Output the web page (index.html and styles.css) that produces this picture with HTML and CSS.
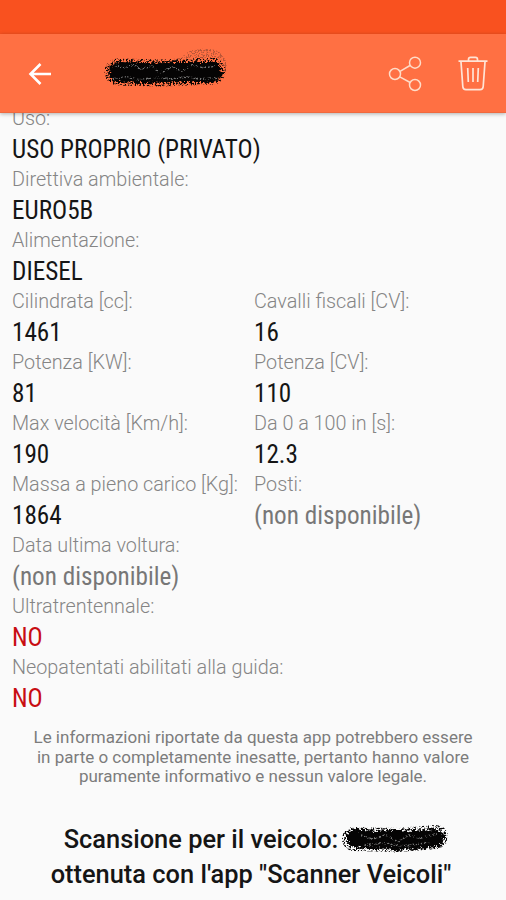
FILE: index.html
```html
<!DOCTYPE html>
<html lang="it">
<head>
    <meta charset="UTF-8">
    <meta name="viewport" content="width=device-width, initial-scale=1.0">
    <title>Scanner Veicoli</title>
    <link rel="stylesheet" href="styles.css">
</head>
<body>

<div class="status-bar"></div>
<header class="toolbar">
    <svg class="back" width="24" height="24" viewBox="0 0 24 24">
        <path d="M12.5 2 L2.5 12 L12.5 22 M2.5 12 H23"/>
    </svg>
    <svg class="plate" width="136" height="60" viewBox="0 0 136 60">
        <defs>
            <filter id="rough" filterUnits="userSpaceOnUse" x="0" y="0" width="136" height="60" color-interpolation-filters="sRGB">
                <feTurbulence type="fractalNoise" baseFrequency="0.4" numOctaves="2" seed="4" result="noise"/>
                <feDisplacementMap in="SourceGraphic" in2="noise" scale="9" xChannelSelector="R" yChannelSelector="G"/>
                <feGaussianBlur stdDeviation="0.5"/>
            </filter>
            <filter id="speckle" filterUnits="userSpaceOnUse" x="0" y="0" width="136" height="60" color-interpolation-filters="sRGB">
                <feTurbulence type="fractalNoise" baseFrequency="0.6" numOctaves="2" seed="9"/>
                <feColorMatrix type="matrix" values="0 0 0 0 0  0 0 0 0 0  0 0 0 0 0  7 0 0 0 -3.4" result="dots"/>
                <feComposite in="SourceGraphic" in2="dots" operator="in"/>
                <feGaussianBlur stdDeviation="0.4"/>
            </filter>
        </defs>
        <path class="spray" filter="url(#speckle)" d="M86 20 Q92 13 106 14 Q120 13 122 26 L118 34"/>
        <g filter="url(#speckle)">
            <path class="halo" d="M18 32 L60 33 L112 31"/>
        </g>
        <g filter="url(#rough)">
            <path class="ink" d="M19 32 L45 33 L80 32 L112 32"/>
        </g>
        <g filter="url(#speckle)">
            <path class="grain" d="M14 25 L24 28 L33 25 L41 29 L52 26 L60 33 L71 27 L82 31 L92 25 L102 28 L114 26 M13 39 L27 37 L40 40 L55 37 L70 39 L86 37 L100 39 L117 38"/>
        </g>
    </svg>
    <svg class="share" width="36" height="38" viewBox="0 0 36 38">
        <circle cx="8" cy="19" r="5.5"/>
        <circle cx="28" cy="7.7" r="5.5"/>
        <circle cx="28" cy="30" r="5.5"/>
        <path d="M13 16.3 L23 10.5 M12.8 21.8 L23.2 27.5"/>
    </svg>
    <svg class="trash" width="32" height="38" viewBox="0 0 32 38">
        <path d="M1.5 6.2 H30.5 M4 7 L5.8 31.5 Q6 34.7 9 34.7 H23 Q26 34.7 26.2 31.5 L28 7 M11.5 5.5 V4.5 Q11.5 2.3 13.5 2.3 H18.5 Q20.5 2.3 20.5 4.5 V5.5"/>
        <path d="M10.7 13 L11.3 27 M16 13 V27 M21.3 13 L20.7 27"/>
    </svg>
</header>

<main class="details">
    <div class="field"><span class="label">Uso:</span><span class="value">USO PROPRIO (PRIVATO)</span></div>
    <div class="field"><span class="label">Direttiva ambientale:</span><span class="value">EURO5B</span></div>
    <div class="field"><span class="label">Alimentazione:</span><span class="value">DIESEL</span></div>
    <div class="pair">
        <div class="field"><span class="label">Cilindrata [cc]:</span><span class="value">1461</span></div>
        <div class="field"><span class="label">Cavalli fiscali [CV]:</span><span class="value">16</span></div>
        <div class="field"><span class="label">Potenza [KW]:</span><span class="value">81</span></div>
        <div class="field"><span class="label">Potenza [CV]:</span><span class="value">110</span></div>
        <div class="field"><span class="label">Max velocità [Km/h]:</span><span class="value">190</span></div>
        <div class="field"><span class="label">Da 0 a 100 in [s]:</span><span class="value">12.3</span></div>
        <div class="field"><span class="label">Massa a pieno carico [Kg]:</span><span class="value">1864</span></div>
        <div class="field"><span class="label">Posti:</span><span class="value missing">(non disponibile)</span></div>
    </div>
    <div class="field"><span class="label">Data ultima voltura:</span><span class="value missing">(non disponibile)</span></div>
    <div class="field"><span class="label">Ultratrentennale:</span><span class="value no">NO</span></div>
    <div class="field"><span class="label">Neopatentati abilitati alla guida:</span><span class="value no">NO</span></div>
</main>

<p class="disclaimer">Le informazioni riportate da questa app potrebbero essere<br>in parte o completamente inesatte, pertanto hanno valore<br>puramente informativo e nessun valore legale.</p>

<footer class="credits">
    <div class="credits-line">Scansione per il veicolo:
        <svg class="plate-small" width="112" height="34" viewBox="0 0 112 34">
            <g filter="url(#speckle)">
                <path class="halo" d="M16 16 L60 17 L98 14"/>
            </g>
            <g filter="url(#rough)">
                <path class="ink" d="M17 15 L36 17 L56 16 L77 17 L97 15"/>
                <path class="tail" d="M50 22 L58 27 L66 22"/>
            </g>
            <g filter="url(#speckle)">
                <path class="grain" d="M22 12 L34 16 L48 12 L60 19 L70 12 L82 15 L98 11 M26 22 L44 20 L66 23 L92 19"/>
            </g>
        </svg>
    </div>
    <div class="credits-line">ottenuta con l'app "Scanner Veicoli"</div>
</footer>

</body>
</html>
```

FILE: styles.css
```css
body {
    margin: 0;
    height: 900px;
    overflow: hidden;
    background-color: #fafafa;
    font-family: Roboto, "Liberation Sans", sans-serif;
}

.status-bar {
    height: 34px;
    background-color: #f9511f;
}

.toolbar {
    position: relative;
    display: flex;
    align-items: center;
    box-sizing: border-box;
    height: 79px;
    padding: 1px 17px 0 28px;
    background-color: #ff7043;
    border-bottom: 1px solid #f0693e;
    box-shadow: 0 1px 4px rgba(0, 0, 0, 0.3);
}

.toolbar svg {
    fill: none;
    flex: none;
}

.back {
    stroke: #fff;
    stroke-width: 2.6;
}

.plate {
    margin-left: 48px;
    margin-top: -7px;
}

.share {
    margin-left: auto;
    stroke: #ffdcc8;
    stroke-width: 1.5;
}

.trash {
    margin-left: 34px;
    stroke: #ffe4d6;
    stroke-width: 1.7;
}

.plate path,
.plate-small path {
    fill: none;
    stroke: #050404;
    stroke-linecap: round;
    stroke-linejoin: round;
}

.plate .ink {
    stroke-width: 20px;
}

.plate .halo {
    stroke-width: 27px;
}

.plate .spray {
    stroke: #713b2c;
    stroke-width: 10px;
    opacity: 0.5;
}

.plate .grain,
.plate-small .grain {
    stroke: #777;
    stroke-width: 2px;
}

.details {
    margin-top: -6px;
    padding: 0 12px;
}

.field {
    display: flex;
    flex-direction: column;
    align-items: flex-start;
    white-space: nowrap;
}

.label {
    font-size: 19.8px;
    line-height: 24px;
    font-weight: 300;
    color: #858585;
}

.value {
    padding-top: 1px;
    font-family: "Roboto Condensed", Roboto, sans-serif;
    font-stretch: 75%;
    font-size: 25.2px;
    line-height: 36px;
    color: #151515;
}

.missing {
    color: #777;
}

.no {
    color: #c80d12;
}

.pair {
    display: grid;
    grid-template-columns: 242px 1fr;
}

.disclaimer {
    margin: 11px 0 0;
    text-align: center;
    font-size: 17px;
    line-height: 19.7px;
    color: #7c7c7c;
}

.credits {
    margin-top: 35px;
    font-size: 25.4px;
    line-height: 35px;
    font-weight: 500;
    color: #151515;
}

.credits-line {
    display: flex;
    justify-content: center;
    align-items: center;
    height: 35px;
    margin-right: 4px;
    white-space: nowrap;
}

.plate-small {
    margin-right: -12px;
}

.plate-small .ink {
    stroke-width: 18px;
}

.plate-small .halo {
    stroke-width: 24px;
}

.plate-small .tail {
    stroke-width: 3px;
}
```
